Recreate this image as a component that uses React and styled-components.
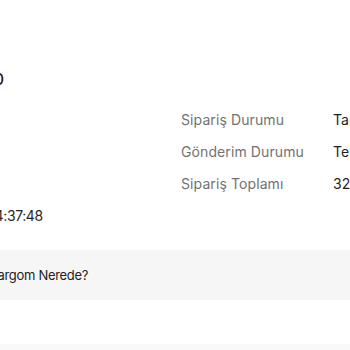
import React from 'react'
import styled, { createGlobalStyle } from 'styled-components';

const GlobalStyle = createGlobalStyle`
  html, body {
    margin: 0;
    padding: 0;
    background: #ffffff;
    overflow: hidden;
  }
  body {
    font-family: Inter, "Noto Sans", "Liberation Sans", sans-serif;
    color: #1f1f1f;
  }
`;

const rows = [
  { label: 'Sipariş Durumu', value: 'Tamamlandı' },
  { label: 'Gönderim Durumu', value: 'Teslim Edildi' },
  { label: 'Sipariş Toplamı', value: '329,90 TL' },
];

export default function App() {
  return (
    <>
      <GlobalStyle />
      <Page>
        <Top>
          <Info>
            <OrderNo>#10000</OrderNo>
            <OrderDate>
              <DateLabel>Saati:</DateLabel>14:37:48
            </OrderDate>
          </Info>
          <Summary>
            {rows.map((r) => (
              <Row key={r.label}>
                <Label>{r.label}</Label>
                <Value>{r.value}</Value>
              </Row>
            ))}
          </Summary>
        </Top>
        <Accordion>Kargom Nerede?</Accordion>
        <Footer />
      </Page>
    </>
  );
}

const Page = styled.div`
  width: 720px;
  margin-left: -54px;
  padding-top: 68px;
`;

const Top = styled.div`
  display: grid;
  grid-template-columns: 235px 1fr;
`;

const Info = styled.div`
  display: flex;
  flex-direction: column;
`;

const OrderNo = styled.div`
  font-size: 16px;
  font-weight: 500;
  line-height: 22px;
  color: #1a1a1a;
`;

const OrderDate = styled.div`
  margin-top: 116px;
  font-size: 14px;
  line-height: 20px;
  letter-spacing: -0.4px;
  color: #262626;
`;

const DateLabel = styled.span`
  margin-right: 9px;
  color: #727272;
`;

const Summary = styled.div`
  margin-top: 35px;
  display: flex;
  flex-direction: column;
`;

const Row = styled.div`
  display: grid;
  grid-template-columns: 152px 1fr;
  height: 32px;
  align-items: center;
  font-size: 14px;
  letter-spacing: 0.1px;
`;

const Label = styled.span`
  color: #727272;
`;

const Value = styled.span`
  color: #1f1f1f;
`;

const Accordion = styled.div`
  margin-top: 24px;
  height: 50px;
  display: flex;
  align-items: center;
  padding-left: 43px;
  background: #f6f6f6;
  font-size: 13px;
  letter-spacing: -0.3px;
  color: #222222;
`;

const Footer = styled.div`
  margin-top: 44px;
  height: 40px;
  background: #f9f9f9;
`;
